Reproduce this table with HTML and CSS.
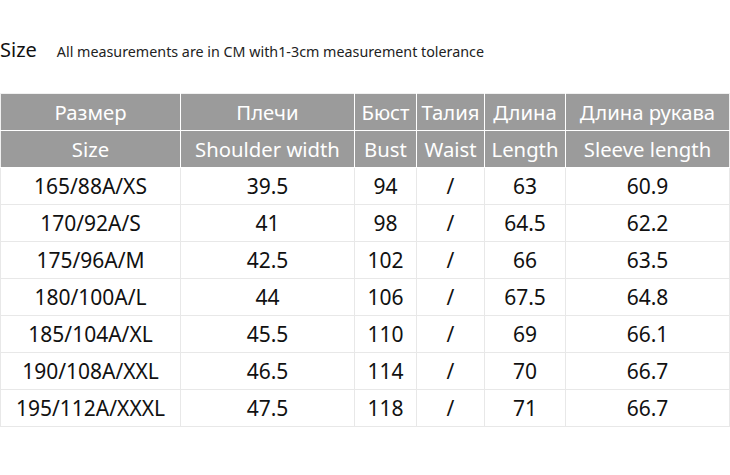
FILE: index.html
```html
<!DOCTYPE html>
<html>
<head>
<meta charset="utf-8">
<link rel="stylesheet" href="styles.css">
</head>
<body>
<div class="title-row">
  <span class="title">Size</span>
  <span class="note">All measurements are in CM with1-3cm measurement tolerance</span>
</div>
<table class="sizes">
  <colgroup>
    <col class="c1"><col class="c2"><col class="c3"><col class="c4"><col class="c5"><col class="c6">
  </colgroup>
  <thead>
    <tr><th>Размер</th><th>Плечи</th><th>Бюст</th><th>Талия</th><th>Длина</th><th>Длина рукава</th></tr>
    <tr><th>Size</th><th>Shoulder width</th><th>Bust</th><th>Waist</th><th>Length</th><th>Sleeve length</th></tr>
  </thead>
  <tbody>
    <tr><td>165/88A/XS</td><td>39.5</td><td>94</td><td>/</td><td>63</td><td>60.9</td></tr>
    <tr><td>170/92A/S</td><td>41</td><td>98</td><td>/</td><td>64.5</td><td>62.2</td></tr>
    <tr><td>175/96A/M</td><td>42.5</td><td>102</td><td>/</td><td>66</td><td>63.5</td></tr>
    <tr><td>180/100A/L</td><td>44</td><td>106</td><td>/</td><td>67.5</td><td>64.8</td></tr>
    <tr><td>185/104A/XL</td><td>45.5</td><td>110</td><td>/</td><td>69</td><td>66.1</td></tr>
    <tr><td>190/108A/XXL</td><td>46.5</td><td>114</td><td>/</td><td>70</td><td>66.7</td></tr>
    <tr><td>195/112A/XXXL</td><td>47.5</td><td>118</td><td>/</td><td>71</td><td>66.7</td></tr>
  </tbody>
</table>
</body>
</html>
```
FILE: styles.css
```css
html, body {
  margin: 0;
  padding: 0;
  background: #ffffff;
}
body {
  font-family: "Noto Sans", "Open Sans", sans-serif;
  color: #111;
}
.title-row {
  height: 93px;
  box-sizing: border-box;
  padding-top: 36px;
  display: flex;
  align-items: baseline;
}
.title {
  font-size: 20px;
  line-height: 28px;
  margin-right: 20px;
}
.note {
  font-size: 14.3px;
  color: #222;
}
.sizes {
  border-collapse: collapse;
  table-layout: fixed;
  width: 729px;
  font-size: 21px;
}
.c1 { width: 180px; }
.c2 { width: 174px; }
.c3 { width: 62px; }
.c4 { width: 68px; }
.c5 { width: 81px; }
.c6 { width: 164px; }
.sizes th, .sizes td {
  height: 36px;
  padding: 0;
  text-align: center;
  white-space: nowrap;
  vertical-align: middle;
  line-height: 24px;
}
.sizes th {
  background: #9b9b9b;
  color: #ffffff;
  font-weight: normal;
  font-size: 20.3px;
  border: 1px solid #ffffff;
}
.sizes td {
  border: 1px solid #e8e8e8;
  color: #111;
}
.sizes thead tr:first-child th {
  border-top: 1px solid #f0f0f0;
}
.sizes th:first-child { border-left: 1px solid #f0f0f0; }
.sizes th:last-child { border-right: 1px solid #f0f0f0; }
```
